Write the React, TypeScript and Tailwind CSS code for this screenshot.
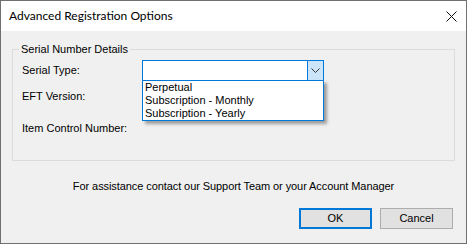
import React from 'react';

const sans = { fontFamily: '"Liberation Sans", Arial, sans-serif' };

export default function App() {
    return (
        <div className="w-[467px] h-[244px] border border-[#707070] bg-[#f0f0f0] flex flex-col text-[11px] text-black" style={sans}>
            {/* Title bar */}
            <div className="h-[30px] bg-white flex items-center justify-between pl-[8px] pr-[9px] shrink-0">
                <span className="text-[12px] text-black" style={{ fontFamily: 'Lato, sans-serif' }}>Advanced Registration Options</span>
                <svg width="11" height="11" viewBox="0 0 11 11" className="mt-[1px]">
                    <path d="M0.5 0.5 L10.5 10.5 M10.5 0.5 L0.5 10.5" stroke="#111" strokeWidth="1" />
                </svg>
            </div>

            {/* Body */}
            <div className="flex-1 flex flex-col px-[11px] pt-[11px]">
                <fieldset className="border border-[#dcdcdc] pl-[9px] pr-[9px] pb-[21px]">
                    <legend className="ml-[-3px] px-[2px] leading-[14px]">Serial Number Details</legend>
                    <div className="flex flex-col mt-[4px]">
                        <div className="flex items-center h-[21px]">
                            <span className="w-[120px]">Serial Type:</span>
                            <div className="relative w-[182px] h-[21px] border border-[#0078d7] bg-white">
                                <div className="absolute right-[-1px] top-[-1px] w-[17px] h-[21px] border border-[#0078d7] bg-[#cce4f7] flex items-center justify-center">
                                    <svg width="9" height="5" viewBox="0 0 9 5">
                                        <path d="M0.5 0.5 L4.5 4.5 L8.5 0.5" stroke="#333" strokeWidth="1" fill="none" />
                                    </svg>
                                </div>
                                <div className="absolute left-[-1px] top-full w-[182px] border border-[#0078d7] bg-white shadow-[3px_3px_3px_rgba(0,0,0,0.35)] z-10 pl-[2px]">
                                    <div className="leading-[13px]">Perpetual</div>
                                    <div className="leading-[13px]">Subscription - Monthly</div>
                                    <div className="leading-[13px]">Subscription - Yearly</div>
                                </div>
                            </div>
                        </div>
                        <div className="flex items-center h-[21px] mt-[5px]">
                            <span className="w-[120px]">EFT Version:</span>
                        </div>
                        <div className="flex items-center h-[21px] mt-[11px]">
                            <span className="w-[120px]">Item Control Number:</span>
                        </div>
                    </div>
                </fieldset>

                <p className="text-center leading-[14px] mt-[18px] tracking-[-0.08px]">For assistance contact our Support Team or your Account Manager</p>

                <div className="flex justify-end gap-[8px] mt-[15px] pr-[2px]">
                    <button className="w-[73px] h-[21px] border-2 border-[#0078d7] bg-[#e1e1e1] text-[11px]">OK</button>
                    <button className="w-[73px] h-[21px] border border-[#adadad] bg-[#e1e1e1] text-[11px]">Cancel</button>
                </div>
            </div>
        </div>
    );
}
